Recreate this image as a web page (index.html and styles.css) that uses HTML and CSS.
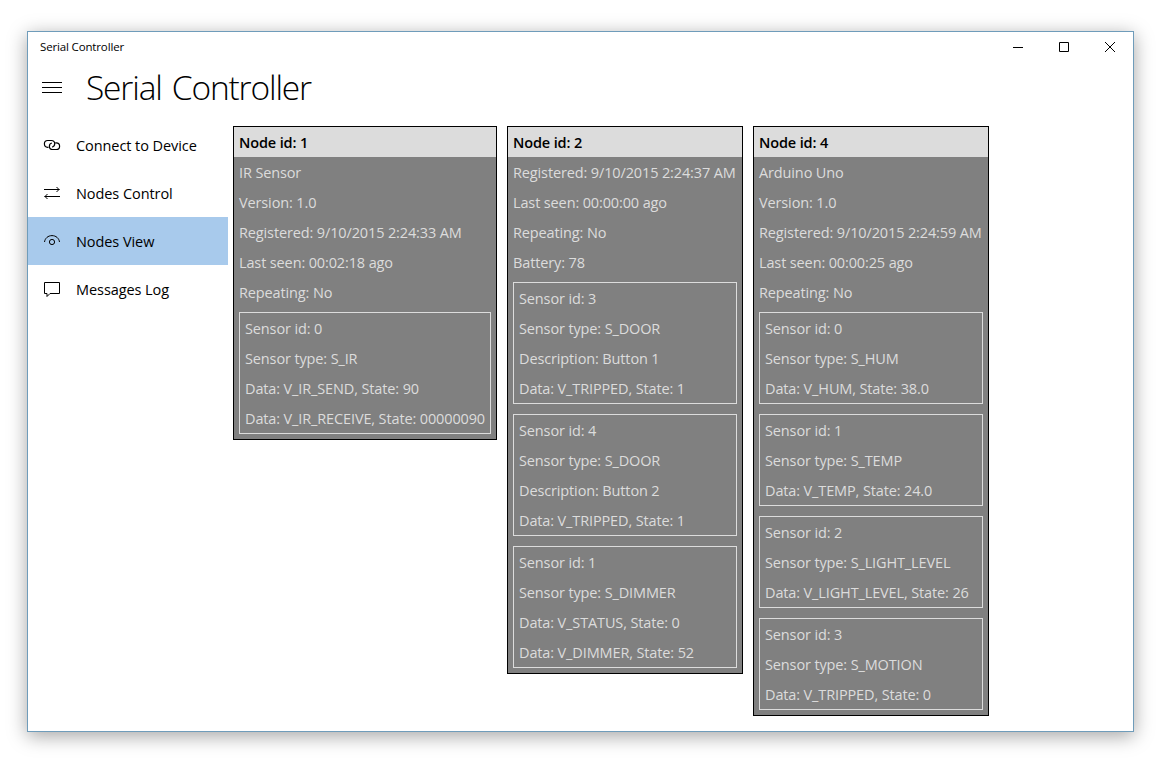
FILE: index.html
```html
<!DOCTYPE html>
<html lang="en">
<head>
<meta charset="utf-8">
<title>Serial Controller</title>
<link rel="stylesheet" href="styles.css">
</head>
<body>
<div class="window">
  <header class="titlebar">
    <span class="caption">Serial Controller</span>
    <div class="controls">
      <svg class="control" viewBox="0 0 46 31"><path d="M18 15.500h10"/></svg>
      <svg class="control" viewBox="0 0 46 31"><path d="M18.500 10.500h9v9h-9z"/></svg>
      <svg class="control" viewBox="0 0 46 31"><path d="M18 10l10 10M28 10L18 20"/></svg>
    </div>
  </header>
  <div class="heading">
    <svg class="menu" viewBox="0 0 48 48"><path d="M14 19.500h20M14 24.500h20M14 29.500h20"/></svg>
    <h1>Serial Controller</h1>
  </div>
  <div class="content">
    <nav class="sidebar">
      <a class="item"><svg class="icon link" viewBox="0 0 48 48"><path d="M20.500 26.300h-.8c-2 0-3.300-1.600-3.300-3.500s1.400-3.300 3.300-3.300h3.600c2 0 3.400 1.500 3.400 3.300 0 1.600-1 2.900-2.500 3.300M27.300 21.900h.9c2 0 3.400 1.500 3.400 3.300s-1.400 3.300-3.400 3.300h-3.500c-2 0-3.300-1.500-3.300-3.300 0-1.600 1-2.900 2.500-3.200"/></svg><span>Connect to Device</span></a>
      <a class="item"><svg class="icon" viewBox="0 0 48 48"><path d="M16 20.500h15.500M28.500 18l2.500 2.500-2.500 2.500M32 27.500H16.500M19.500 25l-2.500 2.500 2.500 2.500"/></svg><span>Nodes Control</span></a>
      <a class="item selected"><svg class="icon" viewBox="0 0 48 48"><path d="M16.500 25c.5-3.700 3.500-6.400 7.500-6.400s7 2.700 7.500 6.400"/><circle cx="24" cy="25" r="2.600"/></svg><span>Nodes View</span></a>
      <a class="item"><svg class="icon" viewBox="0 0 48 48"><path d="M16.500 17.500h15v11h-9.500l-3 3v-3h-2.500z"/></svg><span>Messages Log</span></a>
    </nav>
    <main class="nodes">
      <section class="node wide">
        <h2>Node id: 1</h2>
        <p>IR Sensor</p><p>Version: 1.0</p><p>Registered: 9/10/2015 2:24:33 AM</p><p>Last seen: 00:02:18 ago</p><p>Repeating: No</p>
        <div class="sensor"><p>Sensor id: 0</p><p>Sensor type: S_IR</p><p>Data: V_IR_SEND, State: 90</p><p>Data: V_IR_RECEIVE, State: 00000090</p></div>
      </section>
      <section class="node">
        <h2>Node id: 2</h2>
        <p>Registered: 9/10/2015 2:24:37 AM</p><p>Last seen: 00:00:00 ago</p><p>Repeating: No</p><p>Battery: 78</p>
        <div class="sensor"><p>Sensor id: 3</p><p>Sensor type: S_DOOR</p><p>Description: Button 1</p><p>Data: V_TRIPPED, State: 1</p></div>
        <div class="sensor"><p>Sensor id: 4</p><p>Sensor type: S_DOOR</p><p>Description: Button 2</p><p>Data: V_TRIPPED, State: 1</p></div>
        <div class="sensor"><p>Sensor id: 1</p><p>Sensor type: S_DIMMER</p><p>Data: V_STATUS, State: 0</p><p>Data: V_DIMMER, State: 52</p></div>
      </section>
      <section class="node">
        <h2>Node id: 4</h2>
        <p>Arduino Uno</p><p>Version: 1.0</p><p>Registered: 9/10/2015 2:24:59 AM</p><p>Last seen: 00:00:25 ago</p><p>Repeating: No</p>
        <div class="sensor"><p>Sensor id: 0</p><p>Sensor type: S_HUM</p><p>Data: V_HUM, State: 38.0</p></div>
        <div class="sensor"><p>Sensor id: 1</p><p>Sensor type: S_TEMP</p><p>Data: V_TEMP, State: 24.0</p></div>
        <div class="sensor"><p>Sensor id: 2</p><p>Sensor type: S_LIGHT_LEVEL</p><p>Data: V_LIGHT_LEVEL, State: 26</p></div>
        <div class="sensor"><p>Sensor id: 3</p><p>Sensor type: S_MOTION</p><p>Data: V_TRIPPED, State: 0</p></div>
      </section>
    </main>
  </div>
</div>
</body>
</html>
```
FILE: styles.css
```css
* { box-sizing: border-box; margin: 0; }
body {
  height: 762px;
  padding: 31px 26px 30px 27px;
  background: #fff;
  color: #000;
  font-family: "Open Sans", "Noto Sans", sans-serif;
  font-size: 14.5px;
  overflow: hidden;
}
svg { display: block; fill: none; stroke: #000; stroke-width: 1; }
.window {
  height: 701px;
  border: 1px solid #6f9cba;
  background: #fff;
  box-shadow: 0 4px 18px rgba(0, 0, 0, .36);
}
.titlebar { display: flex; justify-content: space-between; height: 31px; padding-left: 12px; }
.caption { font-size: 11.5px; line-height: 29px; letter-spacing: -.15px; }
.controls { display: flex; }
.control { width: 46px; height: 31px; }
.heading { display: flex; height: 48px; }
.menu { width: 48px; height: 48px; }
h1 {
  margin-left: 10px;
  font-size: 33.5px;
  font-weight: 300;
  line-height: 48px;
  letter-spacing: -1.15px;
  word-spacing: 2.5px;
  white-space: nowrap;
}
.content { display: flex; padding-top: 10px; }
.sidebar { width: 200px; }
.item { display: flex; height: 48px; line-height: 50px; letter-spacing: -.07px; white-space: nowrap; }
.selected { background: #a8caec; }
.icon { width: 48px; height: 48px; }
.link { stroke-width: 1.2; }
.nodes { display: flex; align-items: flex-start; gap: 10px; padding: 5px; }
.node {
  width: 236px;
  border: 1px solid #000;
  background: #808080;
  color: #dcdcdc;
  letter-spacing: -.13px;
  white-space: nowrap;
}
.wide { width: 264px; }
h2 {
  height: 30px;
  padding-left: 5px;
  background: #dcdcdc;
  color: #000;
  font-size: 14.5px;
  font-weight: 600;
  line-height: 31px;
}
p { height: 30px; padding-left: 5px; line-height: 31px; }
.sensor { margin: 5px 5px 10px; border: 1px solid #dcdcdc; }
.sensor:last-child { margin-bottom: 5px; }
```
